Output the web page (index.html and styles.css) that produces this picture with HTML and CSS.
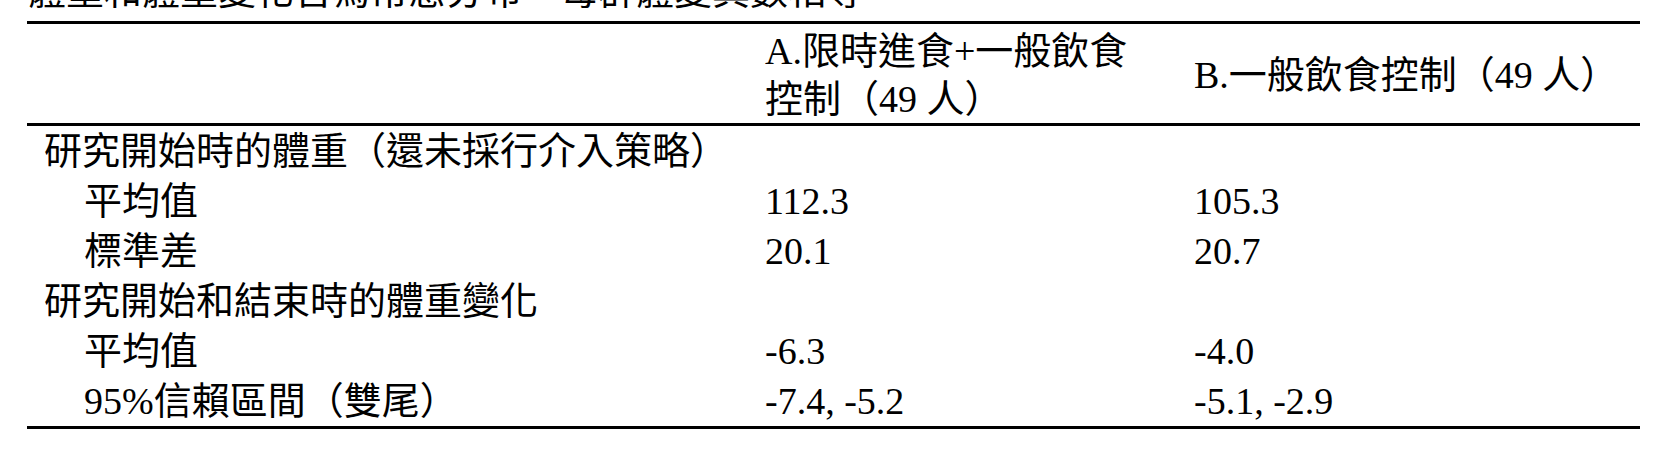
FILE: index.html
```html
<!DOCTYPE html>
<html lang="zh-Hant">
<head>
<meta charset="utf-8">
<title>體重變化統計表</title>
<link rel="stylesheet" href="styles.css">
</head>
<body>
<div class="page">
  <p class="caption">體重和體重變化皆為常態分布，每群體變異數相等</p>
  <table class="stats">
    <colgroup>
      <col class="c-label">
      <col class="c-a">
      <col class="c-b">
    </colgroup>
    <thead>
      <tr>
        <th></th>
        <th>A.限時進食+一般飲食<br>控制（49 人）</th>
        <th>B.一般飲食控制（49 人）</th>
      </tr>
    </thead>
    <tbody>
      <tr><td class="section">研究開始時的體重（還未採行介入策略）</td><td></td><td></td></tr>
      <tr><td class="sub">平均值</td><td>112.3</td><td>105.3</td></tr>
      <tr><td class="sub">標準差</td><td>20.1</td><td>20.7</td></tr>
      <tr><td class="section">研究開始和結束時的體重變化</td><td></td><td></td></tr>
      <tr><td class="sub">平均值</td><td>-6.3</td><td>-4.0</td></tr>
      <tr><td class="sub">95%信賴區間（雙尾）</td><td>-7.4, -5.2</td><td>-5.1, -2.9</td></tr>
    </tbody>
  </table>
</div>
</body>
</html>
```

FILE: styles.css
```css
html, body {
  margin: 0;
  padding: 0;
  background: #ffffff;
  color: #000000;
}

.page {
  padding: 0 25px 0 27px;
  width: 1612px;
}

.caption {
  margin: -31px 0 0 1px;
  height: 38px;
  font-family: "Noto Sans CJK TC", sans-serif;
  font-size: 38px;
  line-height: 38px;
  white-space: nowrap;
}

.stats {
  margin-top: 14px;
  width: 1613px;
  table-layout: fixed;
  border-collapse: separate;
  border-spacing: 0;
  border-top: 3px solid #000;
  border-bottom: 3px solid #000;
  font-family: "Liberation Serif", "Noto Sans CJK TC", serif;
  font-size: 38px;
}

.c-label { width: 721px; }
.c-a { width: 429px; }
.c-b { width: 463px; }

.stats th,
.stats td {
  padding: 0 0 0 17px;
  text-align: left;
  font-weight: normal;
  vertical-align: middle;
  white-space: nowrap;
}

.stats th {
  padding-top: 3px;
  line-height: 48px;
  border-bottom: 3px solid #000;
}

.stats td {
  height: 50px;
  line-height: 50px;
}

.stats td.sub {
  padding-left: 57px;
}
```
